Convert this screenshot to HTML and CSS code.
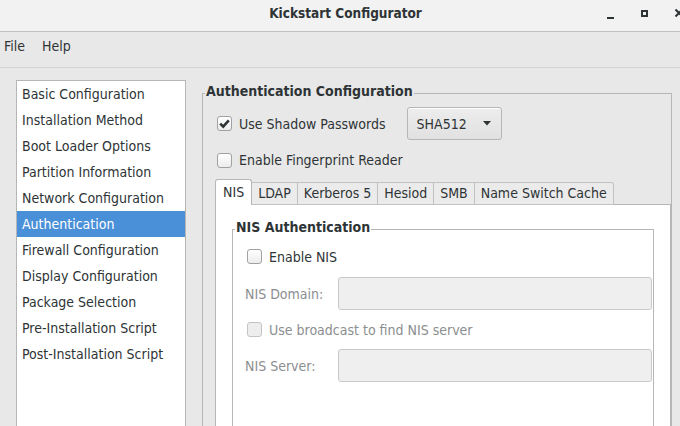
FILE: index.html
```html
<!DOCTYPE html>
<html>
<head>
<meta charset="utf-8">
<link rel="stylesheet" href="styles.css">
</head>
<body>
<div class="window">
  <header class="titlebar">
    <div class="title">Kickstart Configurator</div>
    <div class="controls">
      <span class="ctl-min"></span>
      <span class="ctl-max"></span>
      <span class="ctl-close">
        <svg width="10" height="10" viewBox="0 0 10 10"><path d="M1.5 1.5 L8.5 8.5 M8.5 1.5 L1.5 8.5" stroke="#2e3436" stroke-width="2" fill="none"/></svg>
      </span>
    </div>
  </header>
  <nav class="menubar">
    <span class="menu-item">File</span>
    <span class="menu-item">Help</span>
  </nav>
  <main class="content">
    <ul class="sidebar">
      <li>Basic Configuration</li>
      <li>Installation Method</li>
      <li>Boot Loader Options</li>
      <li>Partition Information</li>
      <li>Network Configuration</li>
      <li class="selected">Authentication</li>
      <li>Firewall Configuration</li>
      <li>Display Configuration</li>
      <li>Package Selection</li>
      <li>Pre-Installation Script</li>
      <li>Post-Installation Script</li>
    </ul>
    <fieldset class="frame outer">
      <legend>Authentication Configuration</legend>
      <div class="outer-body">
        <div class="row row-shadow">
          <label class="check">
            <span class="box checked">
              <svg width="15" height="15" viewBox="0 0 15 15"><path d="M3.2 7.6 L6.2 10.6 L11.8 4.4" stroke="#2e3436" stroke-width="2.6" fill="none" stroke-linecap="butt"/></svg>
            </span>
            <span>Use Shadow Passwords</span>
          </label>
          <button class="combo">
            <span>SHA512</span>
            <svg width="8" height="5" viewBox="0 0 8 5"><path d="M0 0 L8 0 L4 4.5 Z" fill="#2e3436"/></svg>
          </button>
        </div>
        <div class="row row-finger">
          <label class="check">
            <span class="box"></span>
            <span>Enable Fingerprint Reader</span>
          </label>
        </div>
        <div class="notebook">
          <div class="tabs">
            <span class="tab active">NIS</span>
            <span class="tab">LDAP</span>
            <span class="tab">Kerberos 5</span>
            <span class="tab">Hesiod</span>
            <span class="tab">SMB</span>
            <span class="tab last">Name Switch Cache</span>
          </div>
          <div class="page">
            <fieldset class="frame inner">
              <legend>NIS Authentication</legend>
              <div class="nis-grid">
                <label class="check span2 r1">
                  <span class="box"></span>
                  <span>Enable NIS</span>
                </label>
                <span class="field-label">NIS Domain:</span>
                <span class="entry"></span>
                <label class="check span2 disabled">
                  <span class="box"></span>
                  <span>Use broadcast to find NIS server</span>
                </label>
                <span class="field-label">NIS Server:</span>
                <span class="entry"></span>
              </div>
            </fieldset>
          </div>
        </div>
      </div>
    </fieldset>
  </main>
</div>
</body>
</html>
```

FILE: styles.css
```css
* { box-sizing: border-box; }
html, body {
  margin: 0;
  padding: 0;
}
body {
  width: 680px;
  height: 426px;
  overflow: hidden;
  background: #e8e8e8;
  font-family: "DejaVu Sans", sans-serif;
  font-stretch: condensed;
  font-size: 14px;
  color: #2e3436;
}
.window {
  width: 680px;
  height: 426px;
  display: flex;
  flex-direction: column;
  overflow: hidden;
}
.titlebar {
  height: 32px;
  flex: none;
  background: #f2f2f2;
  border-bottom: 1px solid #bfbfbf;
  display: grid;
  grid-template-columns: 1fr auto 1fr;
  align-items: center;
}
.title {
  grid-column: 2;
  font-weight: bold;
  font-size: 13.5px;
  padding-left: 11px;
  padding-bottom: 5px;
}
.controls {
  grid-column: 3;
  justify-self: end;
  display: flex;
  align-items: center;
  height: 100%;
  padding-bottom: 6px;
  margin-right: -4px;
}
.ctl-min {
  width: 7px;
  height: 2px;
  background: #2e3436;
  margin-top: 10px;
  margin-right: 27px;
}
.ctl-max {
  width: 7px;
  height: 7px;
  border: 2px solid #2e3436;
  margin-top: 1px;
  margin-right: 26px;
}
.ctl-close {
  width: 10px;
  height: 10px;
  display: flex;
  margin-top: 1px;
}
.menubar {
  height: 36px;
  flex: none;
  border-bottom: 1px solid #d4d4d4;
  display: flex;
  align-items: flex-start;
  padding: 5px 0 0 4px;
  gap: 0;
}
.menu-item {
  line-height: 18px;
  margin-right: 17px;
}
.content {
  flex: 1;
  display: flex;
  align-items: flex-start;
  padding: 12px 0 0 16px;
  min-height: 0;
}
.sidebar {
  list-style: none;
  margin: 0;
  padding: 0;
  width: 170px;
  height: 400px;
  background: #ffffff;
  border: 1px solid #b6b6b6;
  flex: none;
}
.sidebar li {
  height: 26px;
  line-height: 26px;
  padding-left: 5px;
  white-space: nowrap;
}
.sidebar li.selected {
  background: #4a90d9;
  color: #ffffff;
}
.frame {
  border: 1px solid #b6b6b6;
  margin: 0;
  padding: 0;
  min-width: 0;
}
.frame > legend {
  font-weight: bold;
  font-size: 14px;
  line-height: 17px;
  padding: 0 1px 4px 1px;
  margin-left: 2px;
}
.outer {
  margin-left: 16px;
  margin-top: 3px;
  width: 470px;
  height: 400px;
  flex: none;
}
.outer-body {
  padding: 3px 0 0 12px;
  display: flex;
  flex-direction: column;
}
.row {
  display: flex;
  align-items: center;
  padding-left: 2px;
}
.row-shadow {
  height: 33px;
}
.row-finger {
  height: 24px;
  margin-top: 8px;
}
.check {
  display: flex;
  align-items: center;
  gap: 7px;
  white-space: nowrap;
}
.box {
  width: 15px;
  height: 15px;
  border: 1px solid #a1a1a1;
  border-radius: 3px;
  background: linear-gradient(#ffffff, #ececec);
  display: flex;
  align-items: center;
  justify-content: center;
  flex: none;
}
.box svg { margin: -1px; }
.check.disabled { color: #8b8e8f; }
.check.disabled .box {
  border-color: #c4c4c4;
  background: #ededed;
}
.combo {
  margin-left: 21px;
  width: 95px;
  height: 33px;
  border: 1px solid #b6b6b6;
  border-radius: 3px;
  background: linear-gradient(#ededed, #e1e1e1);
  box-shadow: inset 0 1px #ffffff;
  font: inherit;
  color: inherit;
  display: flex;
  align-items: center;
  justify-content: space-between;
  padding: 0 10px 0 9px;
}
.notebook {
  margin-top: 7px;
  width: 456px;
  display: flex;
  flex-direction: column;
}
.tabs {
  display: flex;
  align-items: flex-end;
  height: 26px;
  margin-bottom: -1px;
  position: relative;
  z-index: 1;
}
.tab {
  height: 23px;
  line-height: 21px;
  padding: 0 6px;
  border: 1px solid #c2c2c2;
  border-left: none;
  background: #ebebeb;
  white-space: nowrap;
}
.tab.active {
  height: 26px;
  line-height: 25px;
  padding: 0 7px;
  background: #ffffff;
  border: 1px solid #b6b6b6;
  border-bottom: none;
  border-radius: 3px 3px 0 0;
}
.tab.last {
  border-top-right-radius: 3px;
}
.page {
  background: #ffffff;
  border: 1px solid #b6b6b6;
  height: 240px;
  padding: 14px 16px 0 16px;
}
.inner {
  height: 240px;
}
.nis-grid {
  display: grid;
  grid-template-columns: 93px 1fr;
  grid-template-rows: 25px 33px 23px 33px;
  row-gap: 8px;
  padding: 4px 0 0 12px;
  align-items: center;
}
.span2 {
  grid-column: 1 / span 2;
  padding-left: 2px;
}
.field-label {
  color: #8b8e8f;
  white-space: nowrap;
}
.entry {
  height: 33px;
  border: 1px solid #c9c9c9;
  border-radius: 3px;
  background: #efefef;
  margin-right: 1px;
}
```
